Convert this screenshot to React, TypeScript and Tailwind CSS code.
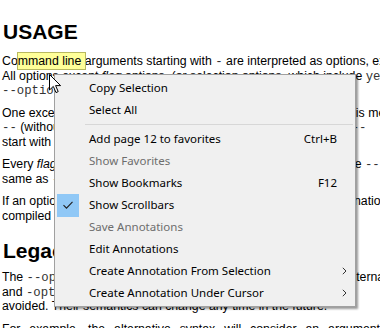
const mono = "font-['Liberation_Mono',monospace] text-[#333] leading-none"

function Check() {
  return (
    <div className="w-[22px] h-[23px] bg-[#90c8f6] flex items-center justify-center">
      <svg width="12" height="10" viewBox="0 0 12 10">
        <path d="M1.5 5.2 L4.5 8.2 L10.5 1.8" fill="none" stroke="#1e1e1e" strokeWidth="1.1" />
      </svg>
    </div>
  )
}

function Arrow() {
  return (
    <svg width="5" height="8" viewBox="0 0 5 8">
      <path d="M0.8 0.8 L4 4 L0.8 7.2" fill="none" stroke="#333" strokeWidth="1" />
    </svg>
  )
}

type Item = { label: string; shortcut?: string; disabled?: boolean; checked?: boolean; sub?: boolean }

function Row({ item }: { item: Item }) {
  return (
    <div className={`flex items-center h-[22px] ${item.disabled ? "text-[#6d6d6d]" : "text-black"}`}>
      <div className="w-[34px] pl-[2px] flex items-center">{item.checked && <Check />}</div>
      <span className="flex-1">{item.label}</span>
      <span>{item.shortcut}</span>
      <div className="w-[18px] pl-[5px] flex items-center">{item.sub && <Arrow />}</div>
    </div>
  )
}

const top: Item[] = [{ label: "Copy Selection" }, { label: "Select All" }]
const rest: Item[] = [
  { label: "Add page 12 to favorites", shortcut: "Ctrl+B" },
  { label: "Show Favorites", disabled: true },
  { label: "Show Bookmarks", shortcut: "F12" },
  { label: "Show Scrollbars", checked: true },
  { label: "Save Annotations", disabled: true },
  { label: "Edit Annotations" },
  { label: "Create Annotation From Selection", sub: true },
  { label: "Create Annotation Under Cursor", sub: true },
]

export default function App() {
  return (
    <div className="relative w-[380px] h-[328px] overflow-hidden bg-white">
      {/* document */}
      <div className="pl-[2px] pt-[20px] font-['Liberation_Sans',Arial,sans-serif] text-[12.3px] leading-[14.5px] text-black whitespace-nowrap">
        <h1 className="text-[21px] font-bold leading-[24px] pl-px">USAGE</h1>
        <div className="mt-[10px]">
          <div>
            Co
            <span className="bg-[#ffff99] outline outline-1 outline-[#b8b860] py-px">mmand line </span>
            arguments starting with <span className={mono}>-</span> are interpreted as options, except the
          </div>
          <div>
            All options except <i>flag</i> options, (or selection options, which include <span className={mono}>yes</span>
          </div>
          <div>
            <span className={mono}>--option value</span> or <span className={mono}>--option=value</span>.
          </div>
        </div>
        <div className="mt-[8px]">
          <div>One exception is the special option that ends the options lists. This means</div>
          <div>
            <span className={mono}>--</span> (without any value) stops option parsing and all the following{" "}
            <span className={mono}>--</span>
          </div>
          <div>start with a dash are files.</div>
        </div>
        <div className="mt-[8px]">
          <div>
            Every <i>flag</i> option can be disabled with values of false, which is the{" "}
            <span className={mono}>--</span>
          </div>
          <div>
            same as <span className={mono}>--no-flag</span>.
          </div>
        </div>
        <div className="mt-[8px]">
          <div>If an option is given many times, the last one is used but a combination</div>
          <div>compiled in.</div>
        </div>
        <h2 className="text-[21px] font-bold leading-[24px] mt-[16px] pl-px">Legacy syntax</h2>
        <div className="mt-[7px]">
          <div>
            The <span className={mono}>--option value</span> form is accepted for the reasons of the alternative
          </div>
          <div>
            and <span className={mono}>-option</span> forms are kept for backwards compatibility to
          </div>
          <div>avoided. Their semantics can change any time in the future.</div>
        </div>
        <div className="mt-[8px] w-[378px] text-justify [text-align-last:justify]">
          For example, the alternative syntax will consider an argument
        </div>
      </div>

      {/* context menu */}
      <div className="absolute left-[54px] top-[74px] w-[302px] bg-[#f0f0f0] border border-[#a0a0a0] shadow-[2px_2px_2px_rgba(0,0,0,0.4)] pt-[2px] pb-[2px] font-['Noto_Sans',sans-serif] text-[11.5px]">
        {top.map((i) => (
          <Row key={i.label} item={i} />
        ))}
        <div className="h-[7px] flex items-center pl-[30px] pr-[2px]">
          <div className="h-px w-full bg-[#d7d7d7]" />
        </div>
        {rest.map((i) => (
          <Row key={i.label} item={i} />
        ))}
      </div>

      {/* mouse cursor */}
      <svg className="absolute left-[49px] top-[74px]" width="13" height="20" viewBox="0 0 13 20">
        <path d="M0.5 0.5 L0.5 16 L4.3 12.4 L7 18.6 L9.2 17.6 L6.6 11.6 L11.6 11.6 Z" fill="white" stroke="black" strokeWidth="1" />
      </svg>
    </div>
  )
}
